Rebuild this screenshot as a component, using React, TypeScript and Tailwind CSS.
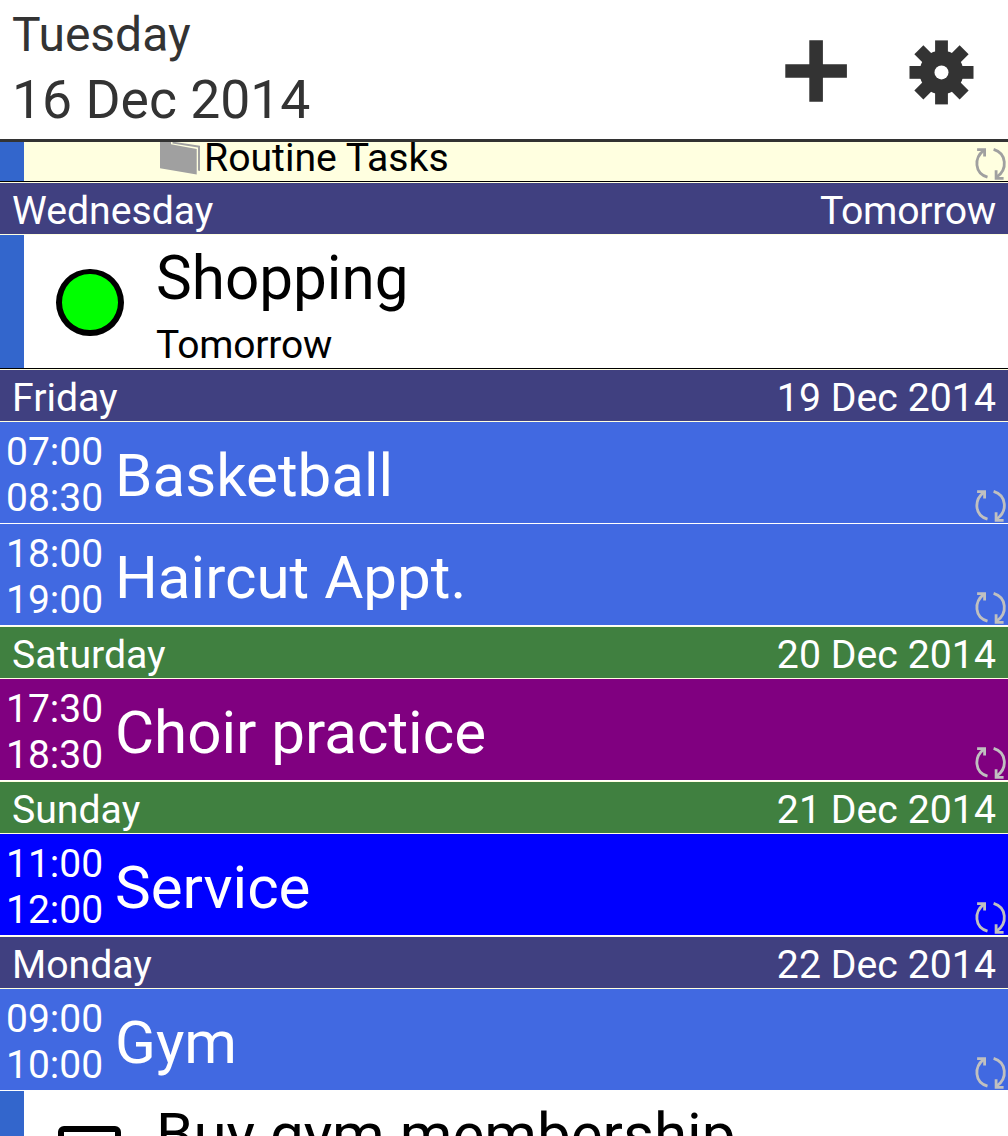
import clsx from "clsx";

type Item = {
    start: string;
    end: string;
    title: string;
    color: string;
};

type Day = {
    name: string;
    date: string;
    weekend?: boolean;
    items: Item[];
};

const days: Day[] = [
    {
        name: "Friday",
        date: "19 Dec 2014",
        items: [
            { start: "07:00", end: "08:30", title: "Basketball", color: "bg-[#4169e1]" },
            { start: "18:00", end: "19:00", title: "Haircut Appt.", color: "bg-[#4169e1]" },
        ],
    },
    {
        name: "Saturday",
        date: "20 Dec 2014",
        weekend: true,
        items: [{ start: "17:30", end: "18:30", title: "Choir practice", color: "bg-[#800080]" }],
    },
    {
        name: "Sunday",
        date: "21 Dec 2014",
        weekend: true,
        items: [{ start: "11:00", end: "12:00", title: "Service", color: "bg-[#0000ff]" }],
    },
    {
        name: "Monday",
        date: "22 Dec 2014",
        items: [{ start: "09:00", end: "10:00", title: "Gym", color: "bg-[#4169e1]" }],
    },
];

function PlusIcon() {
    return (
        <svg width="64" height="64" viewBox="0 0 64 64" fill="#333333">
            <path d="M25.3 1.2h13.6v24h24v13.6h-24v24H25.3v-24h-24V25.2h24z" />
        </svg>
    );
}

function GearIcon() {
    return (
        <svg width="66" height="66" viewBox="-33.5 -33.4 66 66">
            <g fill="#333333">
                <circle r="22" />
                {[0, 45, 90, 135].map((a) => (
                    <rect key={a} x="-6.4" y="-32" width="12.8" height="64" transform={`rotate(${a})`} />
                ))}
            </g>
            <circle r="7" fill="#fff" />
        </svg>
    );
}

function RepeatIcon({ className }: { className: string }) {
    return (
        <svg width="34" height="34" viewBox="-0.3 -0.4 34 34" fill="none" strokeWidth="2.8" className={className}>
            <path d="M9.5 3C-0.5 10.5 0 26 13.2 29.8" />
            <path d="M2.8 2.3H10.3V9.2" />
            <path d="M19.3 2C32.5 6 33.5 22 22.5 29.5" />
            <path d="M21.8 22.8V31H29.3" />
        </svg>
    );
}

function FolderIcon() {
    return (
        <svg width="41" height="34" viewBox="0 0 41 34" fill="#a0a0a0">
            <path d="M0 0H11V2.2L36.7 7V32.5L0 26.3z" />
            <path d="M12.5 0H15L40 3.8V29L38 28.6V5.5L12.5 1.6z" />
        </svg>
    );
}

function DayHeading({ name, date, weekend }: { name: string; date: string; weekend?: boolean }) {
    return (
        <div
            className={clsx(
                "flex h-[53px] justify-between border-y border-[#ffffe0] px-3 pt-[2px] text-[39.2px] leading-[53px] text-white",
                weekend ? "bg-[#408040]" : "bg-[#404080]"
            )}
        >
            <span>{name}</span>
            <span className={date === "Tomorrow" ? "tracking-[-0.3px]" : "tracking-[0.05px]"}>{date}</span>
        </div>
    );
}

function EventRow({ item }: { item: Item }) {
    return (
        <div className={clsx("flex h-[102px] border-b border-white text-white", item.color)}>
            <div className="w-[115px] pl-[6px] pt-[7px] text-[39px] leading-[46px]">
                <p>{item.start}</p>
                <p>{item.end}</p>
            </div>
            <p className="flex-1 pt-[3px] text-[60.1px] leading-[101px]">{item.title}</p>
            <RepeatIcon className="self-end stroke-[#c0c0c0]" />
        </div>
    );
}

function App() {
    return (
        <div className="h-[1136px] w-[1008px] overflow-hidden whitespace-nowrap bg-white font-[Roboto,sans-serif] text-black">
            <header className="flex h-[142px] justify-between border-b-[3px] border-[#333333] pl-3 text-[#333333]">
                <div className="pt-[2px] leading-[65px]">
                    <p className="text-[48px]">Tuesday</p>
                    <p className="text-[53.5px]">16 Dec 2014</p>
                </div>
                <div className="flex gap-[60px] pr-[34px] pt-[39px]">
                    <PlusIcon />
                    <GearIcon />
                </div>
            </header>

            {/* scrolled half under the header */}
            <div className="flex h-10 overflow-hidden border-b border-black bg-[#ffffe0]">
                <div className="w-6 bg-[#3366cc]" />
                <div className="flex flex-1 pl-[136px]">
                    <FolderIcon />
                    <p className="-mt-[7px] pl-[3px] text-[39.2px] leading-[46px]">Routine Tasks</p>
                </div>
                <RepeatIcon className="mt-[5px] stroke-[#a0a0a0]" />
            </div>

            <DayHeading name="Wednesday" date="Tomorrow" />
            <div className="flex h-[134px] border-b border-black">
                <div className="w-6 bg-[#3366cc]" />
                <div className="ml-8 mt-[34px] h-[67px] w-[68px] rounded-full border-[6px] border-t-[5px] border-black bg-[#00ff00]" />
                <div className="pl-8 pt-[9px]">
                    <p className="text-[60.2px] leading-[70px]">Shopping</p>
                    <p className="mt-2 text-[39px] leading-[46px] tracking-[-0.2px]">Tomorrow</p>
                </div>
            </div>

            {days.map((day) => (
                <section key={day.name}>
                    <DayHeading name={day.name} date={day.date} weekend={day.weekend} />
                    {day.items.map((item) => (
                        <EventRow key={item.title} item={item} />
                    ))}
                </section>
            ))}

            <div className="flex h-[134px]">
                <div className="w-6 bg-[#3366cc]" />
                <div className="ml-[34px] mt-[35px] h-16 w-[63px] rounded-[6px] border-[6px] border-black" />
                <p className="pl-[35px] pt-[9px] text-[60.1px] leading-[70px]">Buy gym membership</p>
            </div>
        </div>
    );
}

export default App;
